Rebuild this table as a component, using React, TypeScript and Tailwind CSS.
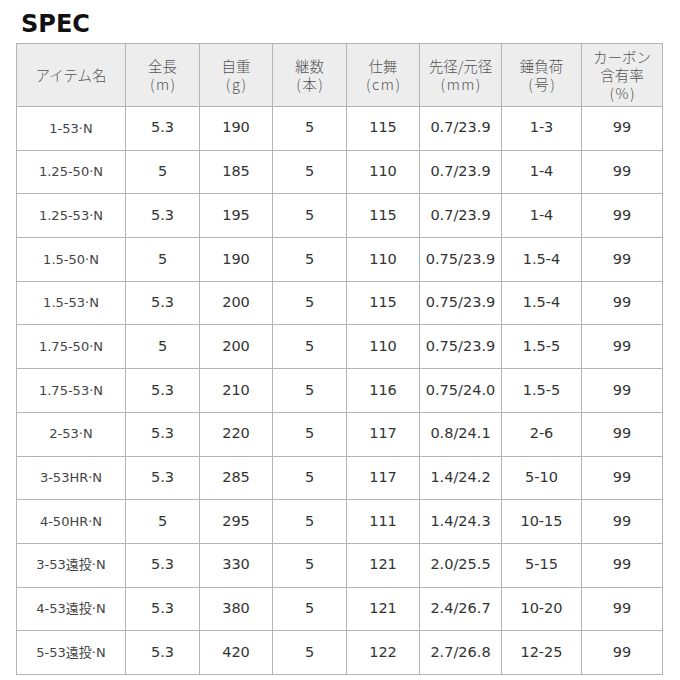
import React from "react";

const rows: string[][] = [
  ["1-53·N", "5.3", "190", "5", "115", "0.7/23.9", "1-3", "99"],
  ["1.25-50·N", "5", "185", "5", "110", "0.7/23.9", "1-4", "99"],
  ["1.25-53·N", "5.3", "195", "5", "115", "0.7/23.9", "1-4", "99"],
  ["1.5-50·N", "5", "190", "5", "110", "0.75/23.9", "1.5-4", "99"],
  ["1.5-53·N", "5.3", "200", "5", "115", "0.75/23.9", "1.5-4", "99"],
  ["1.75-50·N", "5", "200", "5", "110", "0.75/23.9", "1.5-5", "99"],
  ["1.75-53·N", "5.3", "210", "5", "116", "0.75/24.0", "1.5-5", "99"],
  ["2-53·N", "5.3", "220", "5", "117", "0.8/24.1", "2-6", "99"],
  ["3-53HR·N", "5.3", "285", "5", "117", "1.4/24.2", "5-10", "99"],
  ["4-50HR·N", "5", "295", "5", "111", "1.4/24.3", "10-15", "99"],
  ["3-53遠投·N", "5.3", "330", "5", "121", "2.0/25.5", "5-15", "99"],
  ["4-53遠投·N", "5.3", "380", "5", "121", "2.4/26.7", "10-20", "99"],
  ["5-53遠投·N", "5.3", "420", "5", "122", "2.7/26.8", "12-25", "99"],
];

const headers: string[][] = [
  ["アイテム名"],
  ["全長", "(m)"],
  ["自重", "(g)"],
  ["継数", "(本)"],
  ["仕舞", "(cm)"],
  ["先径/元径", "(mm)"],
  ["錘負荷", "(号)"],
  ["カーボン", "含有率", "(%)"],
];

const widths = ["w-[109px]", "w-[74px]", "w-[73px]", "w-[74px]", "w-[73px]", "w-[82px]", "w-[80px]", "w-[81px]"];

export default function App() {
  return (
    <div className="w-[680px] h-[680px] bg-white font-['DejaVu_Sans','Noto_Sans_CJK_JP',sans-serif] text-[#333]">
      <div className="pl-[21px] pt-[10px] h-[43px] text-[24px] leading-[28px] font-bold text-[#111]">SPEC</div>
      <table className="ml-[16px] w-[646px] table-fixed border-collapse">
        <colgroup>
          {widths.map((w, i) => (
            <col key={i} className={w} />
          ))}
        </colgroup>
        <thead>
          <tr className="h-[63px] bg-[#ededed]">
            {headers.map((h, i) => (
              <th
                key={i}
                className="border border-[#b4b4b4] font-light text-[14.5px] leading-[18px] text-[#555] font-['Noto_Sans_CJK_JP',sans-serif] align-middle"
              >
                {h.map((line, j) => (
                  <div key={j} className={line.startsWith("(") ? "tracking-[1.5px] pl-[1.5px]" : ""}>
                    {line}
                  </div>
                ))}
              </th>
            ))}
          </tr>
        </thead>
        <tbody>
          {rows.map((r, i) => (
            <tr key={i} className="h-[43.7px]">
              {r.map((c, j) => (
                <td
                  key={j}
                  className={`border border-[#b4b4b4] text-center align-middle ${
                    j === 0 ? "text-[13px] text-[#444]" : "text-[14.5px] text-[#333]"
                  }`}
                >
                  {c}
                </td>
              ))}
            </tr>
          ))}
        </tbody>
      </table>
    </div>
  );
}
